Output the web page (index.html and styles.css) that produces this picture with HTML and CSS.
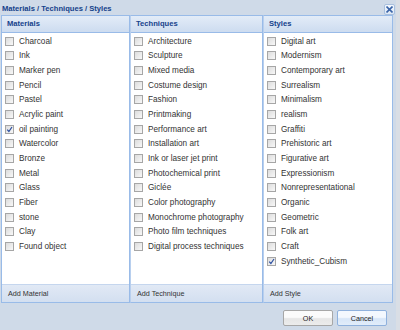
FILE: index.html
```html
<!DOCTYPE html>
<html>
    <head>
        <title>Materials / Techniques / Styles</title>
        <link rel="stylesheet" href="styles.css">
    </head>
    <body>
        <div class="win">
            <div class="titleBar">
                <span class="title">Materials / Techniques / Styles</span>
                <a class="closeBtn" href="#">
                    <svg width="7" height="7" viewBox="0 0 7 7"><path d="M0.5 0.5L6.5 6.5M6.5 0.5L0.5 6.5" stroke="#3a64a8" stroke-width="1.6"/></svg>
                </a>
            </div>
            <div class="panels">
                <div class="panel">
                    <div class="panelHead">Materials</div>
                    <div class="panelBody">
                        <label class="item"><input type="checkbox">Charcoal</label>
                        <label class="item"><input type="checkbox">Ink</label>
                        <label class="item"><input type="checkbox">Marker pen</label>
                        <label class="item"><input type="checkbox">Pencil</label>
                        <label class="item"><input type="checkbox">Pastel</label>
                        <label class="item"><input type="checkbox">Acrylic paint</label>
                        <label class="item"><input type="checkbox" checked>oil painting</label>
                        <label class="item"><input type="checkbox">Watercolor</label>
                        <label class="item"><input type="checkbox">Bronze</label>
                        <label class="item"><input type="checkbox">Metal</label>
                        <label class="item"><input type="checkbox">Glass</label>
                        <label class="item"><input type="checkbox">Fiber</label>
                        <label class="item"><input type="checkbox">stone</label>
                        <label class="item"><input type="checkbox">Clay</label>
                        <label class="item"><input type="checkbox">Found object</label>
                    </div>
                    <div class="panelFoot">Add Material</div>
                </div>
                <div class="panel">
                    <div class="panelHead">Techniques</div>
                    <div class="panelBody">
                        <label class="item"><input type="checkbox">Architecture</label>
                        <label class="item"><input type="checkbox">Sculpture</label>
                        <label class="item"><input type="checkbox">Mixed media</label>
                        <label class="item"><input type="checkbox">Costume design</label>
                        <label class="item"><input type="checkbox">Fashion</label>
                        <label class="item"><input type="checkbox">Printmaking</label>
                        <label class="item"><input type="checkbox">Performance art</label>
                        <label class="item"><input type="checkbox">Installation art</label>
                        <label class="item"><input type="checkbox">Ink or laser jet print</label>
                        <label class="item"><input type="checkbox">Photochemical print</label>
                        <label class="item"><input type="checkbox">Giclée</label>
                        <label class="item"><input type="checkbox">Color photography</label>
                        <label class="item"><input type="checkbox">Monochrome photography</label>
                        <label class="item"><input type="checkbox">Photo film techniques</label>
                        <label class="item"><input type="checkbox">Digital process techniques</label>
                    </div>
                    <div class="panelFoot">Add Technique</div>
                </div>
                <div class="panel">
                    <div class="panelHead">Styles</div>
                    <div class="panelBody">
                        <label class="item"><input type="checkbox">Digital art</label>
                        <label class="item"><input type="checkbox">Modernism</label>
                        <label class="item"><input type="checkbox">Contemporary art</label>
                        <label class="item"><input type="checkbox">Surrealism</label>
                        <label class="item"><input type="checkbox">Minimalism</label>
                        <label class="item"><input type="checkbox">realism</label>
                        <label class="item"><input type="checkbox">Graffiti</label>
                        <label class="item"><input type="checkbox">Prehistoric art</label>
                        <label class="item"><input type="checkbox">Figurative art</label>
                        <label class="item"><input type="checkbox">Expressionism</label>
                        <label class="item"><input type="checkbox">Nonrepresentational</label>
                        <label class="item"><input type="checkbox">Organic</label>
                        <label class="item"><input type="checkbox">Geometric</label>
                        <label class="item"><input type="checkbox">Folk art</label>
                        <label class="item"><input type="checkbox">Craft</label>
                        <label class="item"><input type="checkbox" checked>Synthetic_Cubism</label>
                    </div>
                    <div class="panelFoot">Add Style</div>
                </div>
            </div>
            <div class="buttons">
                <a class="btn" href="#">OK</a>
                <a class="btn btnHover" href="#">Cancel</a>
            </div>
        </div>
    </body>
</html>
```

FILE: styles.css
```css
html,body{
    margin:0;
    padding:0;
    background:#d9dee5;
    font-family:"Liberation Sans",Arial,sans-serif;
}
.win{
    width:396px;
    height:330px;
    background:#cfdae8;
    box-sizing:border-box;
    padding:0 3px 0 1px;
}
.titleBar{
    height:15px;
    display:flex;
    align-items:center;
    justify-content:space-between;
    padding-left:1px;
}
.title{
    font-size:7.6px;
    font-weight:bold;
    color:#15428b;
    margin-top:1px;
}
.closeBtn{
    width:11px;
    height:11px;
    box-sizing:border-box;
    border:1px solid #a9c0de;
    border-radius:2px;
    background:linear-gradient(#f4f8fd,#dce7f5);
    display:flex;
    align-items:center;
    justify-content:center;
    margin-top:3px;
    margin-right:-2px;
}
.panels{
    display:grid;
    grid-template-columns:129px 133px 130px;
    height:288px;
}
.panel{
    border:1px solid #99bbe8;
    display:flex;
    flex-direction:column;
    background:#fff;
}
.panel+.panel{
    border-left:1px solid #b8cfee;
}
.panelHead{
    height:16px;
    line-height:16px;
    padding-left:5px;
    font-size:7.6px;
    font-weight:bold;
    color:#15428b;
    background:linear-gradient(#e3ecf8,#cddcf0);
    border-bottom:1px solid #99bbe8;
}
.panelBody{
    flex:1;
    padding-top:1px;
}
.item{
    display:flex;
    align-items:center;
    height:14.67px;
    padding-left:3px;
    font-size:8.2px;
    color:#333;
    white-space:nowrap;
}
.item input{
    appearance:none;
    -webkit-appearance:none;
    width:9px;
    height:9px;
    margin:0 5px 0 0;
    border:1px solid #a6a6a6;
    background:linear-gradient(135deg,#dcdcdc,#f8f8f8);
    box-sizing:border-box;
}
.item input:checked{
    background:url("data:image/svg+xml;utf8,<svg xmlns='http://www.w3.org/2000/svg' width='7' height='7'><path d='M1.2 3.6L2.9 5.5L6 1' fill='none' stroke='%232c4fa0' stroke-width='1.2'/></svg>") center no-repeat,linear-gradient(135deg,#dcdcdc,#f8f8f8);
}
.panelFoot{
    height:17px;
    line-height:17px;
    padding-left:6px;
    font-size:7.2px;
    color:#333;
    background:linear-gradient(#e1e9f5,#d3dff0);
    border-top:1px solid #c5d6ee;
}
.buttons{
    display:flex;
    justify-content:flex-end;
    gap:4px;
    padding:7px 6px 0 0;
}
.btn{
    display:block;
    width:50px;
    height:16px;
    line-height:15px;
    box-sizing:border-box;
    text-align:center;
    font-size:7.2px;
    color:#222;
    text-decoration:none;
    border:1px solid #a7a7a7;
    border-radius:2px;
    background:linear-gradient(#fbfbfb 45%,#e6e6e6 55%,#ececec);
}
.btnHover{
    border-color:#8fb1dd;
    background:linear-gradient(#f3f8fe 45%,#d7e6f8 55%,#e2edfa);
}
```
